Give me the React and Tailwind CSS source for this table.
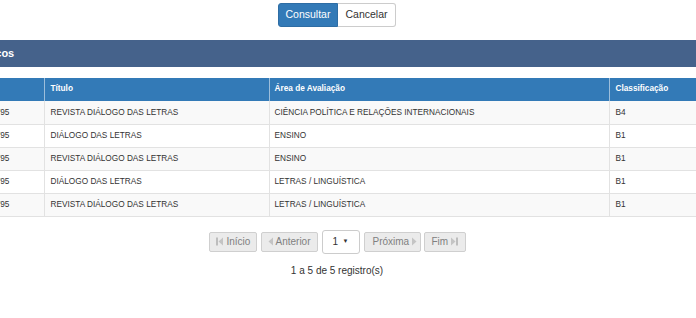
import React from "react";

const rows = [
  ["2316-1795", "REVISTA DIÁLOGO DAS LETRAS", "CIÊNCIA POLÍTICA E RELAÇÕES INTERNACIONAIS", "B4"],
  ["2316-1795", "DIÁLOGO DAS LETRAS", "ENSINO", "B1"],
  ["2316-1795", "REVISTA DIÁLOGO DAS LETRAS", "ENSINO", "B1"],
  ["2316-1795", "DIÁLOGO DAS LETRAS", "LETRAS / LINGUÍSTICA", "B1"],
  ["2316-1795", "REVISTA DIÁLOGO DAS LETRAS", "LETRAS / LINGUÍSTICA", "B1"],
];

function FirstIcon() {
  return (
    <svg width="8" height="9" viewBox="0 0 8 9" className="shrink-0">
      <rect x="0" y="0.5" width="2" height="8" fill="#bdbdbd" />
      <polygon points="7,0.5 7,8.5 2.5,4.5" fill="#c4c4c4" />
    </svg>
  );
}
function PrevIcon() {
  return (
    <svg width="5" height="9" viewBox="0 0 5 9" className="shrink-0">
      <polygon points="5,0.5 5,8.5 0.5,4.5" fill="#c4c4c4" />
    </svg>
  );
}
function NextIcon() {
  return (
    <svg width="5" height="9" viewBox="0 0 5 9" className="shrink-0">
      <polygon points="0,0.5 0,8.5 4.5,4.5" fill="#c4c4c4" />
    </svg>
  );
}
function LastIcon() {
  return (
    <svg width="8" height="9" viewBox="0 0 8 9" className="shrink-0">
      <polygon points="0,0.5 0,8.5 4.5,4.5" fill="#c4c4c4" />
      <rect x="5" y="0.5" width="2" height="8" fill="#bdbdbd" />
    </svg>
  );
}

const pageBtn =
  "h-[20px] flex items-center gap-[3px] border border-[#cfcfcf] bg-[#ebebeb] rounded-[2px] text-[10px] text-[#808080] leading-none";

export default function App() {
  return (
    <div
      className="w-[696px] h-[318px] overflow-hidden bg-white text-[#333]"
      style={{ fontFamily: '"Liberation Sans", Arial, sans-serif' }}
    >
      <div className="w-[718px] -ml-[22px]">
        {/* form actions */}
        <div className="flex justify-center pt-[3px]">
          <button className="h-[24px] w-[60px] bg-[#337ab7] border border-[#2e6da4] rounded-l-[3px] text-white text-[10.5px]">
            Consultar
          </button>
          <button className="h-[24px] w-[58px] bg-white border border-[#ccc] border-l-0 rounded-r-[3px] text-[#333] text-[10.5px]">
            Cancelar
          </button>
        </div>

        {/* panel heading */}
        <div className="mt-[13px] h-[27px] bg-[#45628b] flex items-center">
          <span className="-ml-[20px] text-white font-bold text-[11px] whitespace-nowrap">Periódicos</span>
        </div>

        {/* results table */}
        <div className="mt-[11px] -ml-[19px] w-[738px]">
          <table className="w-full border-collapse table-fixed text-[8.25px]">
            <colgroup>
              <col className="w-[85px]" />
              <col className="w-[225px]" />
              <col className="w-[340px]" />
              <col className="w-[88px]" />
            </colgroup>
            <thead>
              <tr className="h-[23px] bg-[#337ab7] text-white font-bold">
                <th className="text-left pl-[11px] border-r border-[#9dbedb] font-bold">ISSN</th>
                <th className="text-left pl-[6px] border-r border-[#9dbedb] font-bold">Título</th>
                <th className="text-left pl-[5px] border-r border-[#9dbedb] font-bold">Área de Avaliação</th>
                <th className="text-left pl-[6px] font-bold">Classificação</th>
              </tr>
            </thead>
            <tbody>
              {rows.map((r, i) => (
                <tr
                  key={i}
                  className={`h-[23px] border-b border-[#e2e2e2] ${i % 2 === 0 ? "bg-[#f9f9f9]" : "bg-white"}`}
                >
                  <td className="pl-[11px] pt-[2px] border-r border-[#e2e2e2] whitespace-nowrap">{r[0]}</td>
                  <td className="pl-[6px] pt-[2px] border-r border-[#e2e2e2] whitespace-nowrap">{r[1]}</td>
                  <td className="pl-[5px] pt-[2px] border-r border-[#e2e2e2] whitespace-nowrap">{r[2]}</td>
                  <td className="pl-[6px] pt-[2px] whitespace-nowrap">{r[3]}</td>
                </tr>
              ))}
            </tbody>
          </table>
        </div>

        {/* pagination */}
        <div className="mt-[13px] flex justify-center items-center gap-[3px]">
          <div className={`${pageBtn} w-[48px] pl-[6px]`}>
            <FirstIcon />
            <span>Início</span>
          </div>
          <div className={`${pageBtn} w-[57px] pl-[6px] ml-[1px]`}>
            <PrevIcon />
            <span>Anterior</span>
          </div>
          <div className="h-[24px] w-[38px] ml-[1px] flex items-center justify-between px-[10px] border border-[#ccc] rounded-[3px] bg-white text-[10px] text-[#333]">
            <span>1</span>
            <span className="text-[6px]">▼</span>
          </div>
          <div className={`${pageBtn} w-[57px] pl-[8px] ml-[1px]`}>
            <span>Próxima</span>
            <NextIcon />
          </div>
          <div className={`${pageBtn} w-[42px] pl-[7px]`}>
            <span>Fim</span>
            <LastIcon />
          </div>
        </div>

        <div className="mt-[9px] text-center text-[10px] text-[#333]">1 a 5 de 5 registro(s)</div>
      </div>
    </div>
  );
}
